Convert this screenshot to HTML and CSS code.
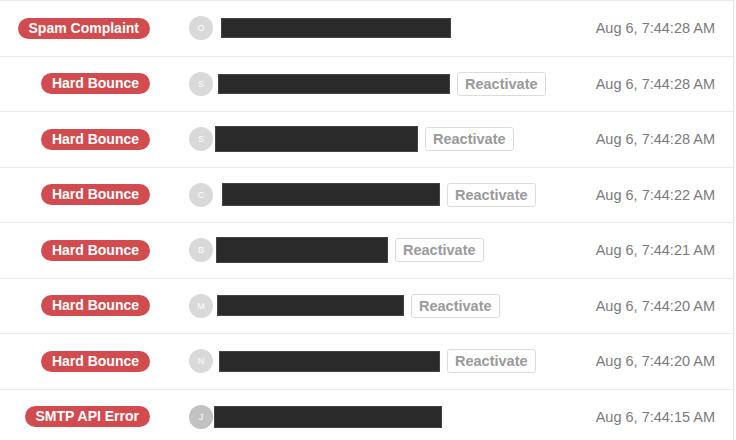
FILE: index.html
```html
<!DOCTYPE html>
<html lang="en">
<head>
<meta charset="utf-8">
<title>Suppressions</title>
<link rel="stylesheet" href="styles.css">
</head>
<body>
<div class="list">
  <div class="row">
    <div class="status"><span class="badge">Spam Complaint</span></div>
    <span class="avatar">O</span>
    <span class="redact" style="margin-left:8px;width:230px;height:20px"></span>
    <span class="date">Aug 6, 7:44:28 AM</span>
  </div>
  <div class="row">
    <div class="status"><span class="badge">Hard Bounce</span></div>
    <span class="avatar">S</span>
    <span class="redact" style="margin-left:5px;width:232px;height:20px"></span>
    <button class="btn">Reactivate</button>
    <span class="date">Aug 6, 7:44:28 AM</span>
  </div>
  <div class="row">
    <div class="status"><span class="badge">Hard Bounce</span></div>
    <span class="avatar">S</span>
    <span class="redact" style="margin-left:2px;width:203px;height:26px"></span>
    <button class="btn">Reactivate</button>
    <span class="date">Aug 6, 7:44:28 AM</span>
  </div>
  <div class="row">
    <div class="status"><span class="badge">Hard Bounce</span></div>
    <span class="avatar">C</span>
    <span class="redact" style="margin-left:9px;width:218px;height:23px"></span>
    <button class="btn">Reactivate</button>
    <span class="date">Aug 6, 7:44:22 AM</span>
  </div>
  <div class="row">
    <div class="status"><span class="badge">Hard Bounce</span></div>
    <span class="avatar">B</span>
    <span class="redact" style="margin-left:3px;width:172px;height:26px"></span>
    <button class="btn">Reactivate</button>
    <span class="date">Aug 6, 7:44:21 AM</span>
  </div>
  <div class="row">
    <div class="status"><span class="badge">Hard Bounce</span></div>
    <span class="avatar">M</span>
    <span class="redact" style="margin-left:4px;width:187px;height:21px"></span>
    <button class="btn">Reactivate</button>
    <span class="date">Aug 6, 7:44:20 AM</span>
  </div>
  <div class="row">
    <div class="status"><span class="badge">Hard Bounce</span></div>
    <span class="avatar">N</span>
    <span class="redact" style="margin-left:6px;width:221px;height:21px"></span>
    <button class="btn">Reactivate</button>
    <span class="date">Aug 6, 7:44:20 AM</span>
  </div>
  <div class="row">
    <div class="status"><span class="badge">SMTP API Error</span></div>
    <span class="avatar avatar-dark">J</span>
    <span class="redact" style="margin-left:1px;width:228px;height:22px"></span>
    <span class="date">Aug 6, 7:44:15 AM</span>
  </div>
</div>
</body>
</html>
```

FILE: styles.css
```css
* { box-sizing: border-box; }
html, body { margin: 0; padding: 0; background: #fff; }
body {
  font-family: "Liberation Sans", Arial, Helvetica, sans-serif;
  font-size: 14px;
  color: #333;
}
.list {
  width: 734px;
  border-top: 1px solid #e9e9e9;
  border-right: 1px solid #e4e4e4;
}
.row {
  display: flex;
  align-items: center;
  height: 55.5px;
  border-bottom: 1px solid #e9e9e9;
}
.status {
  width: 150px;
  flex: none;
  display: flex;
  justify-content: flex-end;
}
.badge {
  display: inline-block;
  background: #d24b4e;
  color: #fff;
  font-weight: bold;
  font-size: 14px;
  line-height: 21px;
  height: 21px;
  padding: 0 11px;
  border-radius: 11px;
  white-space: nowrap;
}
.avatar {
  flex: none;
  width: 24px;
  height: 24px;
  margin-left: 39px;
  border-radius: 50%;
  background: #d9d9d9;
  color: #fff;
  font-size: 9px;
  line-height: 24px;
  text-align: center;
}
.avatar-dark { background: #c2c2c2; }
.redact {
  flex: none;
  display: block;
  background: #2a2a2a;
  border: 1px solid #444;
}
.btn {
  flex: none;
  margin-left: 7px;
  height: 24px;
  padding: 0 7px;
  background: #fff;
  border: 1px solid #dcdcdc;
  border-radius: 3px;
  font-family: inherit;
  font-size: 14.5px;
  font-weight: bold;
  color: #9a9a9a;
}
.date {
  margin-left: auto;
  padding-right: 18px;
  font-size: 14.5px;
  color: #7b7b7b;
  white-space: nowrap;
}
```
